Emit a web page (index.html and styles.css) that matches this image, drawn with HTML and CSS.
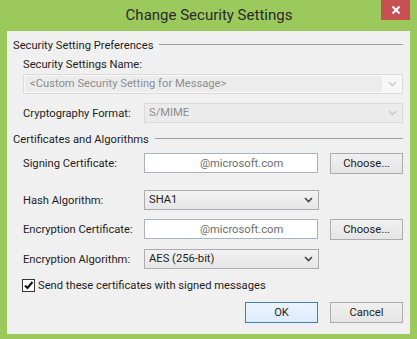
FILE: index.html
```html
<!DOCTYPE html>
<html>
<head>
<meta charset="utf-8">
<link rel="stylesheet" href="styles.css">
</head>
<body>
<div class="window">
  <div class="titlebar">
    <div class="title">Change Security Settings</div>
    <div class="close"><svg width="10" height="10" viewBox="0 0 10 10"><path d="M1.5 1.5 L8.5 8.5 M8.5 1.5 L1.5 8.5" stroke="#fff" stroke-width="2"/></svg></div>
  </div>
  <div class="client">
    <div class="section s1"><span>Security Setting Preferences</span><i class="rule"></i></div>
    <div class="label-line">Security Settings Name:</div>
    <div class="combo disabled wide">
      <div class="combo-text">&lt;Custom Security Setting for Message&gt;</div>
      <div class="combo-arrow"><svg width="9" height="6" viewBox="0 0 9 6"><path d="M1 1 L4.5 4.5 L8 1" fill="none" stroke="#c8c8c8" stroke-width="1.4"/></svg></div>
    </div>
    <div class="row r-crypto">
      <div class="label">Cryptography Format:</div>
      <div class="combo disabled2 grow">
        <div class="combo-text">S/MIME</div>
        <div class="combo-arrow"><svg width="9" height="6" viewBox="0 0 9 6"><path d="M1 1 L4.5 4.5 L8 1" fill="none" stroke="#c8c8c8" stroke-width="1.4"/></svg></div>
      </div>
    </div>
    <div class="section s2"><span>Certificates and Algorithms</span><i class="rule"></i></div>
    <div class="row r-sign">
      <div class="label">Signing Certificate:</div>
      <div class="field"><span class="blur"></span>@microsoft.com</div>
      <div class="btn choose">Choose...</div>
    </div>
    <div class="row r-hash">
      <div class="label">Hash Algorithm:</div>
      <div class="combo enabled">
        <div class="combo-text">SHA1</div>
        <div class="combo-arrow"><svg width="9" height="6" viewBox="0 0 9 6"><path d="M1 1 L4.5 4.5 L8 1" fill="none" stroke="#444" stroke-width="1.6"/></svg></div>
      </div>
    </div>
    <div class="row r-enc">
      <div class="label">Encryption Certificate:</div>
      <div class="field"><span class="blur"></span>@microsoft.com</div>
      <div class="btn choose">Choose...</div>
    </div>
    <div class="row r-alg">
      <div class="label">Encryption Algorithm:</div>
      <div class="combo enabled">
        <div class="combo-text">AES (256-bit)</div>
        <div class="combo-arrow"><svg width="9" height="6" viewBox="0 0 9 6"><path d="M1 1 L4.5 4.5 L8 1" fill="none" stroke="#444" stroke-width="1.6"/></svg></div>
      </div>
    </div>
    <div class="check-row">
      <div class="checkbox"><svg width="11" height="11" viewBox="0 0 11 11"><path d="M2 5.5 L4.5 8 L9.5 2" fill="none" stroke="#111" stroke-width="2"/></svg></div>
      <div class="check-label">Send these certificates with signed messages</div>
    </div>
    <div class="buttons">
      <div class="btn ok">OK</div>
      <div class="btn cancel">Cancel</div>
    </div>
  </div>
</div>
</body>
</html>
```
FILE: styles.css
```css
* { box-sizing: border-box; }
html, body { margin: 0; padding: 0; }
body {
  width: 417px;
  height: 339px;
  background: #9cc95c;
  font-family: Roboto, Lato, sans-serif;
  font-size: 11.2px;
  color: #1e1e1e;
  overflow: hidden;
}
.window { display: flex; flex-direction: column; height: 339px; }
.titlebar {
  position: relative;
  height: 31px;
  display: flex;
  justify-content: center;
  align-items: flex-start;
}
.title {
  font-size: 15px;
  color: #2a2a2a;
  padding-top: 6px;
  padding-left: 1px;
}
.close {
  position: absolute;
  left: 381px;
  top: 0;
  width: 29px;
  height: 20px;
  background: #c75050;
  display: flex;
  align-items: center;
  justify-content: center;
}
.client {
  margin: 0 7px 0 7px;
  height: 303px;
  background: #f0f0f0;
  padding: 6px 7px 0 6px;
  display: flex;
  flex-direction: column;
}
.section {
  display: flex;
  align-items: center;
  height: 16px;
}
.section .rule {
  flex: 1;
  height: 1px;
  background: #a0a0a0;
  margin-left: 6px;
  margin-top: -1px;
}
.s2 { margin-top: 8px; }
.label-line { margin-left: 10px; margin-top: 4px; height: 16px; line-height: 16px; }
.combo {
  height: 20px;
  display: flex;
  align-items: stretch;
}
.combo-text { flex: 1; padding-left: 4px; line-height: 18px; white-space: nowrap; overflow: hidden; }
.combo-arrow { width: 20px; display: flex; align-items: center; justify-content: center; }
.wide { margin-left: 10px; margin-top: 1px; }
.disabled {
  border: 1px solid #dadada;
  background: #f7f7f7;
  color: #8d8d8d;
}
.disabled .combo-text { background: #ececec; margin: 1px 0 1px 1px; line-height: 16px; padding-left: 5px; }
.disabled2 {
  border: 1px solid #d9d9d9;
  background: #ebebeb;
  color: #8d8d8d;
}
.enabled {
  width: 175px;
  border: 1px solid #acacac;
  background: linear-gradient(#f2f2f2, #e6e6e6);
}
.row {
  display: flex;
  align-items: center;
  margin-left: 10px;
  height: 20px;
}
.label { width: 121px; flex: none; white-space: nowrap; }
.grow { flex: 1; }
.r-crypto { margin-top: 9px; }
.r-sign { margin-top: 6px; height: 21px; }
.r-hash { margin-top: 16px; }
.r-enc { margin-top: 9px; height: 21px; }
.r-alg { margin-top: 9px; }
.field {
  width: 175px;
  height: 20px;
  border: 1px solid #a6b3c2;
  background: #fff;
  display: flex;
  align-items: center;
  color: #6d6d6d;
  align-self: flex-start;
}
.field .blur { width: 55px; flex: none; }
.btn {
  height: 21px;
  border: 1px solid #acacac;
  background: linear-gradient(#f0f0f0, #e5e5e5);
  display: flex;
  align-items: center;
  justify-content: center;
  color: #1e1e1e;
}
.choose { width: 73px; margin-left: 12px; align-self: flex-start; }
.check-row {
  display: flex;
  align-items: center;
  margin-top: 9px;
  margin-left: 9px;
  height: 14px;
}
.checkbox {
  width: 13px;
  height: 13px;
  border: 1px solid #333;
  background: #fff;
  display: flex;
  align-items: center;
  justify-content: center;
}
.check-label { margin-left: 3px; }
.buttons {
  display: flex;
  justify-content: flex-end;
  gap: 12px;
  margin-top: 10px;
}
.buttons .btn { width: 73px; height: 21px; }
.ok { border-color: #3c7fb1; background: linear-gradient(#ecf4fc, #dcecfc); }
```
